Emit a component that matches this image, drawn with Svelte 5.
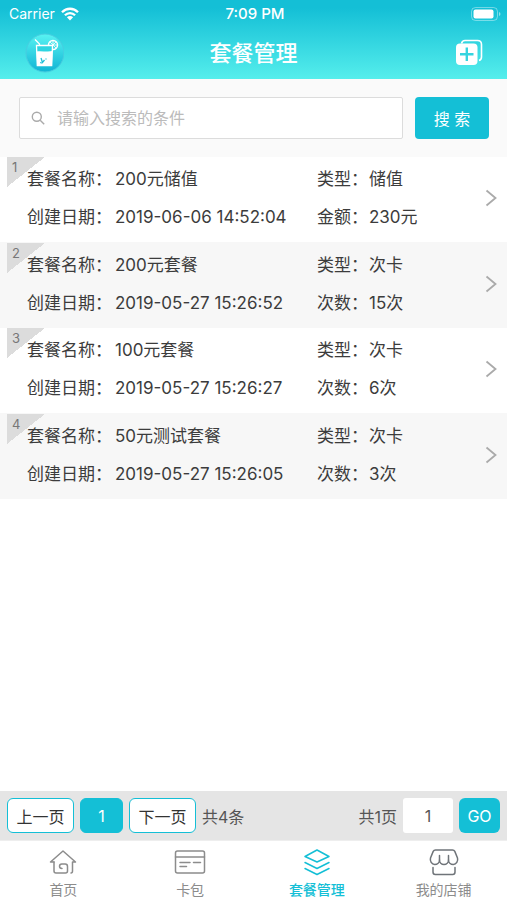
<script>
	let keyword = "";
	let currentPage = 1;
	let gotoPage = "1";
	const totalPages = 1;

	const packages = [
		{ id: 1, name: "200元储值", date: "2019-06-06 14:52:04", type: "储值", label: "金额", value: "230元" },
		{ id: 2, name: "200元套餐", date: "2019-05-27 15:26:52", type: "次卡", label: "次数", value: "15次" },
		{ id: 3, name: "100元套餐", date: "2019-05-27 15:26:27", type: "次卡", label: "次数", value: "6次" },
		{ id: 4, name: "50元测试套餐", date: "2019-05-27 15:26:05", type: "次卡", label: "次数", value: "3次" },
	];

	const tabs = [
		{ key: "home", title: "首页" },
		{ key: "cards", title: "卡包" },
		{ key: "packages", title: "套餐管理" },
		{ key: "shop", title: "我的店铺" },
	];
	let activeTab = "packages";

	const setPage = (page) => {
		currentPage = Math.min(Math.max(1, Number(page) || 1), totalPages);
		gotoPage = String(currentPage);
	};
</script>

<div class="app">
	<header>
		<div class="status">
			<span class="carrier">
				Carrier
				<svg width="18" height="14" viewBox="0 0 18 14" aria-hidden="true">
					<g fill="none" stroke="#fff" stroke-width="2.3">
						<path d="M1 5.2C5.5.6 12.5.6 17 5.2" />
						<path d="M3.9 8.2c2.9-2.9 7.3-2.9 10.2 0" />
					</g>
					<path d="M9 13.5 5.9 10.3c1.7-1.6 4.5-1.6 6.2 0z" fill="#fff" />
				</svg>
			</span>
			<span class="time">7:09 PM</span>
			<svg class="battery" width="30" height="14" viewBox="0 0 30 14" aria-hidden="true">
				<rect x=".5" y=".5" width="26" height="13" rx="4" fill="none" stroke="#fff" stroke-opacity=".4" />
				<rect x="2.5" y="2.5" width="20" height="9" rx="2" fill="#fff" />
				<path d="M28 5c2 .8 2 3.2 0 4z" fill="#fff" fill-opacity=".5" />
			</svg>
		</div>
		<div class="titlebar">
			<a class="logo" href="#profile" aria-label="个人中心">
				<svg width="40" height="40" viewBox="0 0 40 40">
					<defs>
						<linearGradient id="logo-bg" x1="0" y1="0" x2="0" y2="1">
							<stop offset="0" stop-color="#58f3f2" />
							<stop offset="1" stop-color="#10b4d4" />
						</linearGradient>
					</defs>
					<circle cx="21" cy="20" r="19" fill="url(#logo-bg)" stroke="#48cde0" />
					<circle cx="29" cy="12" r="4.5" fill="none" stroke="#fff" stroke-width="1.5" />
					<path d="M29 12V8m0 4h4m-4 0-3-3m3 3 3-3m-3 3 3 3" stroke="#fff" stroke-width=".8" />
					<path d="M11 6.500l4.500 4.500v6" fill="none" stroke="#fff" stroke-width="1.300" />
					<path d="M12.500 12.500h16l-.8 20H13.300z" fill="#2ed5e1" stroke="#fff" stroke-width="1.300" />
					<path d="M12.500 18.500c5-.8 11 .8 16-.4l-.6 14.900H13.200z" fill="#fff" />
					<path d="m17 25 1.500 4.500 2-2.500m1.500-1.500v1m-5.500 2.500 1 1.500" fill="none" stroke="#1fc0d8" stroke-width="1.300" />
				</svg>
			</a>
			<h1>套餐管理</h1>
			<button class="add" aria-label="新增套餐">
				<svg width="28" height="28" viewBox="0 0 28 28">
					<path d="M6.5 4.5C7 2.200 8 1.500 10 1.500h12.500c3 0 4 1 4 4v12.500c0 2-.8 3-2.500 3.500" fill="none" stroke="#fff" stroke-width="1.600" />
					<rect x="1" y="4.5" width="21.5" height="21.5" rx="4" fill="#fff" />
					<path d="M11.8 8.500v13.500M5 15.200h13.500" stroke="#35d4df" stroke-width="2.400" />
				</svg>
			</button>
		</div>
	</header>

	<form class="search" on:submit|preventDefault>
		<label class="search-box">
			<svg width="14" height="14" viewBox="0 0 14 14" fill="none" stroke="#aaa" stroke-width="1.400" aria-hidden="true">
				<circle cx="5.8" cy="5.8" r="4.5" />
				<path d="m9.200 9.200 4 4" />
			</svg>
			<input type="text" bind:value={keyword} placeholder="请输入搜索的条件" aria-label="搜索" />
		</label>
		<button class="search-btn">搜 索</button>
	</form>

	<main>
		<ul class="list">
			{#each packages as item (item.id)}
				<li>
					<a class="row" href="#package-{item.id}">
						<span class="corner"><span class="corner-no">{item.id}</span></span>
						<span class="field"><span>套餐名称：</span><span>{item.name}</span></span>
						<span class="field short"><span>类型：</span><span>{item.type}</span></span>
						<span class="field"><span>创建日期：</span><span>{item.date}</span></span>
						<span class="field short"><span>{item.label}：</span><span>{item.value}</span></span>
						<svg class="arrow" width="12" height="18" viewBox="0 0 12 18" aria-hidden="true">
							<path d="m1.500 1.500 9 7.500-9 7.500" fill="none" stroke="#aaa" stroke-width="1.800" />
						</svg>
					</a>
				</li>
			{/each}
		</ul>
	</main>

	<form class="pager" on:submit|preventDefault={() => setPage(gotoPage)}>
		<button type="button" class="page-btn" on:click={() => setPage(currentPage - 1)}>上一页</button>
		<button type="button" class="page-btn current">{currentPage}</button>
		<button type="button" class="page-btn" on:click={() => setPage(currentPage + 1)}>下一页</button>
		<span>共{packages.length}条</span>
		<span class="total">共{totalPages}页</span>
		<input type="text" inputmode="numeric" bind:value={gotoPage} aria-label="页码" />
		<button class="go">GO</button>
	</form>

	<nav>
		{#each tabs as tab (tab.key)}
			<a href="#{tab.key}" class:active={activeTab === tab.key} on:click={() => (activeTab = tab.key)}>
				<svg width="32" height="28" viewBox="0 0 32 28" fill="none" stroke="currentColor" stroke-width="1.500" stroke-linejoin="round" stroke-linecap="round" aria-hidden="true">
					{#if tab.key === "home"}
						<path d="M7 14H3.500L16 3l12.500 11H25.500v9c0 1.200-.5 2-1.500 2" />
						<path d="M7 14v9c0 1.200.8 2 2 2h9.500c1.500 0 2-.8 2-2v-4.500c0-1.500-.8-2.500-2.300-2.500h-3.400c-1.500 0-2.300 1-2.300 2.300 0 1.700.8 2.200 2.500 2.200" />
					{:else if tab.key === "cards"}
						<rect x="1.500" y="3" width="29" height="22" rx="2" />
						<path d="M1.500 9h29M6 14.500h10m3.500 0h7M6 18.500h6.500" />
					{:else if tab.key === "packages"}
						<path d="M16 2 28 8.500 16 14 4 8.500z" />
						<path d="m4 14.500 12 6 12-6M4 20.500l12 6 12-6" />
					{:else}
						<g stroke="#6f7479">
							<path d="M7.500 2h17c1.200 0 1.800.4 2.300 1.400l2.700 6.600c.8 3-1.200 6.500-4.200 6.500-2.700 0-4.800-2-4.800-4.500 0 2.500-2 4.500-4.500 4.500s-4.500-2-4.500-4.500c0 2.500-2.100 4.500-4.800 4.500-3 0-5-3.500-4.200-6.500l2.700-6.600C5.700 2.400 6.300 2 7.500 2z" />
							<path d="M11.500 12V7.500m9 4.500V7.500" />
							<path d="M5 19.500V24c0 1.500.8 2.500 2.300 2.500h17.400c1.500 0 2.300-1 2.300-2.500v-4.500" />
						</g>
					{/if}
				</svg>
				<span>{tab.title}</span>
			</a>
		{/each}
	</nav>
</div>

<style>
	:global(body) {
		background: #fff;
	}

	.app {
		display: flex;
		flex-direction: column;
		min-height: 100vh;
		font-family: Inter, "Noto Sans CJK SC", sans-serif;
		font-size: 17px;
		color: #3c3c3c;
	}

	button,
	input {
		box-sizing: border-box;
		margin: 0;
		padding: 0;
		border: 0;
		font: inherit;
		color: inherit;
		background: none;
	}

	a {
		color: inherit;
		text-decoration: none;
	}

	svg {
		display: block;
	}

	header {
		background: linear-gradient(#14bfd6 10%, #55eeec);
		color: #fff;
	}

	.status {
		display: grid;
		grid-template-columns: 1fr auto 1fr;
		align-items: center;
		height: 27px;
		padding: 0 6px 0 9px;
		font-size: 14px;
	}

	.carrier {
		display: flex;
		align-items: center;
		gap: 6px;
	}

	.time {
		font-size: 15px;
		font-weight: 500;
	}

	.battery {
		justify-self: end;
	}

	.titlebar {
		display: grid;
		grid-template-columns: 40px 1fr 40px;
		align-items: center;
		height: 52px;
		padding: 0 24px;
	}

	h1 {
		margin: 0;
		font-size: 22px;
		line-height: 30px;
		font-weight: 500;
		text-align: center;
	}

	.add {
		justify-self: end;
	}

	.search {
		display: flex;
		gap: 12px;
		padding: 18px 18px 18px 19px;
		background: #fafafa;
	}

	.search-box {
		display: flex;
		flex: 1;
		align-items: center;
		gap: 12px;
		padding: 0 11px;
		border: 1px solid #dcdcdc;
		border-radius: 2px;
		background: #fff;
	}

	.search-box input {
		flex: 1;
		min-width: 0;
		height: 40px;
		font-size: 16px;
		outline: none;
	}

	.search-box input::placeholder {
		color: #bbb;
	}

	.search-btn {
		width: 74px;
		border-radius: 4px;
		background: #14bfd6;
		color: #fff;
		font-size: 16px;
	}

	main {
		flex: 1;
	}

	.list {
		margin: 0;
		padding: 0;
		list-style: none;
	}

	li:nth-child(odd) {
		border-bottom: 1px solid #f7f7f7;
	}

	li:nth-child(even) {
		background: #f7f7f7;
	}

	.row {
		display: grid;
		grid-template-columns: 290fr 168fr 12px;
		align-items: center;
		position: relative;
		padding: 3px 10px 6px 27px;
		line-height: 38px;
	}

	/* keeps the text above the corner triangle */
	.field {
		display: grid;
		grid-template-columns: 88px 1fr;
		position: relative;
		white-space: nowrap;
	}

	.field.short {
		grid-template-columns: 52px 1fr;
	}

	.arrow {
		grid-column: 3;
		grid-row: 1 / 3;
	}

	.corner {
		position: absolute;
		top: 0;
		left: 7px;
		width: 38px;
		height: 30px;
		background: linear-gradient(to bottom right, #dcdcdc 50%, transparent 50%);
	}

	.corner-no {
		display: block;
		padding: 2px 5px;
		font-size: 13px;
		line-height: 16px;
		color: #777;
	}

	.pager {
		display: flex;
		align-items: center;
		gap: 6px;
		padding: 7px;
		background: #e5e5e5;
		font-size: 16px;
		color: #555;
	}

	.page-btn {
		width: 67px;
		height: 35px;
		border: 1px solid #14bfd6;
		border-radius: 6px;
		background: #fff;
		color: #333;
	}

	.page-btn.current {
		width: 43px;
		background: #14bfd6;
		color: #fff;
	}

	.total {
		margin-left: auto;
	}

	.pager input {
		width: 50px;
		height: 35px;
		border-radius: 3px;
		background: #fff;
		text-align: center;
	}

	.go {
		width: 41px;
		height: 35px;
		border-radius: 6px;
		background: #14bfd6;
		color: #fff;
	}

	nav {
		display: grid;
		grid-template-columns: repeat(4, 1fr);
		padding: 7px 0 0;
		border-top: 1px solid #eee;
	}

	nav a {
		display: flex;
		flex-direction: column;
		align-items: center;
		gap: 4px;
		font-size: 14px;
		line-height: 20px;
		color: #8c8c8c;
	}

	nav a.active {
		color: #14bfd6;
		font-weight: 500;
	}
</style>
